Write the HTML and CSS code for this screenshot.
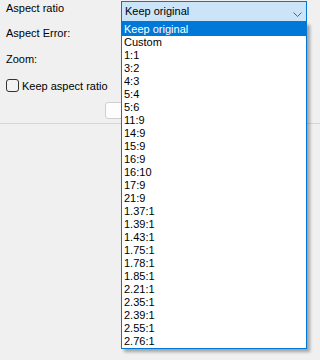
FILE: index.html
```html
<!DOCTYPE html>
<html lang="en">
<head>
<meta charset="utf-8">
<title>Aspect ratio</title>
<link rel="stylesheet" href="styles.css">
</head>
<body>
<div class="panel">
  <div class="row row-first">
    <div class="lbl lbl-first">Aspect ratio</div>
    <div class="combo-wrap">
      <div class="combo">
        <span class="combo-text">Keep original</span>
        <svg class="chev" width="9" height="5" viewBox="0 0 9 5"><polyline points="0.5,0.5 4.5,4.5 8.5,0.5" fill="none" stroke="#606060" stroke-width="1"/></svg>
      </div>
      <ul class="list">
        <li class="sel">Keep original</li>
        <li>Custom</li>
        <li>1:1</li>
        <li>3:2</li>
        <li>4:3</li>
        <li>5:4</li>
        <li>5:6</li>
        <li>11:9</li>
        <li>14:9</li>
        <li>15:9</li>
        <li>16:9</li>
        <li>16:10</li>
        <li>17:9</li>
        <li>21:9</li>
        <li>1.37:1</li>
        <li>1.39:1</li>
        <li>1.43:1</li>
        <li>1.75:1</li>
        <li>1.78:1</li>
        <li>1.85:1</li>
        <li>2.21:1</li>
        <li>2.35:1</li>
        <li>2.39:1</li>
        <li>2.55:1</li>
        <li>2.76:1</li>
      </ul>
    </div>
  </div>
  <div class="row row-error"><div class="lbl">Aspect Error:</div></div>
  <div class="row row-zoom"><div class="lbl">Zoom:</div></div>
  <label class="check-row"><span class="box"></span><span class="check-text">Keep aspect ratio</span></label>
  <div class="btn-row"><button class="btn" type="button"></button></div>
</div>
<div class="sep"></div>
</body>
</html>
```
FILE: styles.css
```css
html, body {
  margin: 0;
  padding: 0;
  background: #f0f0f0;
  height: 100%;
}
body {
  font-family: "Liberation Sans", Arial, sans-serif;
  font-size: 11px;
  color: #000;
  overflow: hidden;
}
.panel {
  padding: 1px 8px 0 6px;
  display: flex;
  flex-direction: column;
}
.row {
  display: flex;
  align-items: flex-start;
}
.lbl {
  width: 115px;
  line-height: 13px;
  white-space: nowrap;
}
.lbl-first {
  margin-top: 1px;
}
.row-first {
  height: 21px;
}
.row-error {
  margin-top: 5px;
}
.row-zoom {
  margin-top: 13px;
}
.combo-wrap {
  position: relative;
  width: 186px;
}
.combo {
  box-sizing: border-box;
  height: 21px;
  width: 186px;
  border: 1px solid #0078d7;
  background: #cce4f7;
  display: flex;
  align-items: flex-start;
  justify-content: space-between;
  padding: 3px 4px 0 3px;
}
.combo-text {
  line-height: 13px;
}
.chev {
  margin-top: 7px;
}
.list {
  position: absolute;
  left: 0;
  top: 21px;
  width: 186px;
  box-sizing: border-box;
  margin: 0;
  padding: 0;
  list-style: none;
  background: #fff;
  border: 1px solid #0078d7;
  box-shadow: 3px 3px 3px rgba(0, 0, 0, 0.32);
  z-index: 5;
}
.list li {
  height: 13px;
  line-height: 13px;
  padding-left: 2px;
  white-space: nowrap;
}
.list li.sel {
  background: #0078d7;
  color: #fff;
}
.check-row {
  margin-top: 13px;
  display: flex;
  align-items: center;
  height: 13px;
}
.box {
  box-sizing: border-box;
  width: 13px;
  height: 13px;
  border: 1px solid #333;
  border-radius: 3px;
  background: #f3f3f3;
}
.check-text {
  margin-left: 3px;
  line-height: 13px;
  margin-top: 1px;
}
.btn-row {
  margin-top: 10px;
  display: flex;
  padding-left: 99px;
}
.btn {
  box-sizing: border-box;
  width: 75px;
  height: 17px;
  border: 1px solid #d0d0d0;
  border-radius: 3px;
  background: #fdfdfd;
  padding: 0;
}
.sep {
  margin-top: 4px;
  height: 0;
  border-top: 1px solid #d6d6d6;
}
```
